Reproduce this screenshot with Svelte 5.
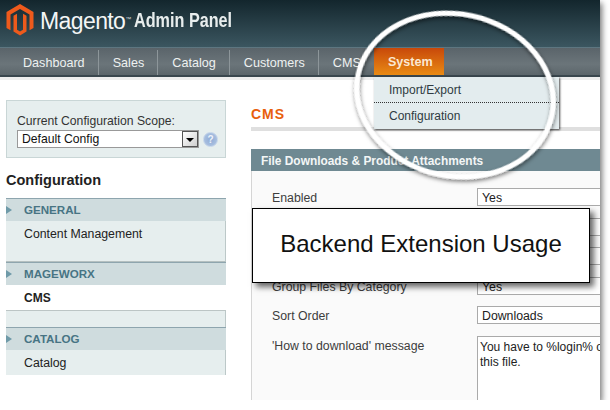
<script>
  const menu = ['Dashboard', 'Sales', 'Catalog', 'Customers', 'CMS'];
  const groups = [
    { title: 'GENERAL', items: ['Content Management'], cls: 'tall' },
    { title: 'MAGEWORX', items: ['CMS'], cls: 'active' },
    { title: 'CATALOG', items: ['Catalog'], cls: '' }
  ];
</script>

<div class="shot">
  <header class="top">
    <svg class="logo" width="28" height="32" viewBox="0 0 28 32">
      <path fill="#ee5a1c" d="M14 0 L27.5 8 V24 L23.5 26.3 V10.4 L14 4.9 L4.5 10.4 V26.3 L.5 24 V8 Z" />
      <path fill="#ee5a1c" d="M14 8 L20.5 11.8 V27.6 L14 31.5 L7.5 27.6 V11.8 L11 9.8 V25.8 L14 27.5 L17 25.8 V9.8 Z" />
    </svg>
    <span class="brand">Magento</span><span class="tm">™</span>
    <span class="panel">Admin Panel</span>
  </header>

  <nav class="nav">
    {#each menu as m}
      <span class="nav-item">{m}</span>
    {/each}
    <span class="nav-item system">System</span>
  </nav>

  <div class="page">
    <aside class="side">
      <div class="scope">
        <div class="scope-label">Current Configuration Scope:</div>
        <div class="scope-row">
          <div class="select">
            <span>Default Config</span>
            <span class="arrow"></span>
          </div>
          <span class="help">?</span>
        </div>
      </div>
      <h3>Configuration</h3>
      {#each groups as g}
        <div class="group-head"><span class="tri"></span>{g.title}</div>
        <div class="group-body {g.cls}">
          {#each g.items as it}<div class="link">{it}</div>{/each}
        </div>
        {#if g.cls === 'active'}<div class="spacer"></div>{/if}
      {/each}
    </aside>

    <main class="main">
      <h2>CMS</h2>
      <div class="section-head">File Downloads &amp; Product Attachments</div>
      <div class="form">
        <div class="row"><label>Enabled</label><div class="input">Yes</div></div>
        <div class="row"><label></label><div class="input"></div></div>
        <div class="row"><label></label><div class="input"></div></div>
        <div class="row"><label>Group Files By Category</label><div class="input">Yes</div></div>
        <div class="row"><label>Sort Order</label><div class="input">Downloads</div></div>
        <div class="row r7">
          <label>'How to download' message</label>
          <div class="input area">You have to %login% or register to download<br />this file.</div>
        </div>
      </div>
    </main>
  </div>

  <div class="drop">
    <div class="drop-item first">Import/Export</div>
    <div class="drop-item">Configuration</div>
  </div>

  <svg class="ring" width="240" height="200" viewBox="0 0 240 200">
    <defs>
      <filter id="ringshadow" x="-20%" y="-20%" width="140%" height="140%">
        <feDropShadow dx="1" dy="2" stdDeviation="2.2" flood-color="#000" flood-opacity="0.55" />
      </filter>
    </defs>
    <ellipse cx="120" cy="95" rx="99" ry="81" transform="rotate(12 120 95)" fill="none" stroke="#fff" stroke-width="5" filter="url(#ringshadow)" />
  </svg>

  <div class="callout">Backend Extension Usage</div>
</div>

<style>
  :global(body) {
    margin: 0;
    background: #fff;
  }

  .shot {
    position: relative;
    width: 600px;
    height: 400px;
    background: #fff;
    overflow: hidden;
    font-family: "Liberation Sans", Arial, sans-serif;
    box-shadow: 2px 3px 6px rgba(0, 0, 0, 0.55);
  }

  .top {
    height: 47px;
    border-bottom: 1px solid #5d7680;
    background: linear-gradient(#13262d, #3b5660);
    display: flex;
    align-items: flex-start;
    padding-left: 6px;
    color: #fff;
  }

  .logo { margin-top: 4px; }

  .brand {
    font-size: 23px;
    margin: 8px 0 0 6px;
    letter-spacing: -0.6px;
    color: #f4f6f6;
  }

  .tm { font-size: 6px; margin-top: 16px; color: #ddd; }

  .panel {
    font-weight: bold;
    font-size: 20px;
    margin: 9px 0 0 3px;
    color: #e8eded;
    transform: scaleX(0.81);
    transform-origin: left;
    white-space: nowrap;
  }

  .nav {
    height: 27px;
    display: flex;
    padding-left: 9px;
    background: linear-gradient(#5a646a, #6b757a 60%, #5c666b);
    border-bottom: 2px solid #3a474e;
  }

  .nav-item {
    padding: 0 13.1px 0 14px;
    font-size: 12.6px;
    color: #eef1f1;
    border-right: 1px solid #8d969a;
    margin: 2px 0 0;
    line-height: 26px;
  }

  .nav-item:nth-child(5) { border-right: 0; }

  .system {
    margin: 0;
    line-height: 28px;
    width: 70px;
    box-sizing: border-box;
    padding: 0 0 0 14px;
    font-weight: bold;
    border-right: 0;
    color: #fbe8d2;
    background: linear-gradient(#c8480a, #e98b14);
  }

  .page {
    display: flex;
    height: 323px;
    border-top: 3px solid #eee;
    box-sizing: border-box;
  }

  .side {
    width: 220px;
    margin-left: 6px;
    padding-top: 20px;
    box-sizing: border-box;
    flex: none;
  }

  .scope {
    height: 58px;
    box-sizing: border-box;
    background: #e6eeee;
    border: 1px solid #c9d6d6;
    padding: 13px 0 0 10px;
    font-size: 12.2px;
    color: #333;
  }

  .scope-row { display: flex; align-items: center; margin-top: 2px; }

  .select {
    width: 182px;
    height: 18px;
    box-sizing: border-box;
    border: 1px solid #999;
    background: #fff;
    display: flex;
    justify-content: space-between;
    align-items: center;
    padding-left: 4px;
    color: #111;
  }

  .arrow {
    width: 16px;
    height: 16px;
    box-sizing: border-box;
    border: 1px solid #555;
    background: linear-gradient(135deg, #fff, #cfcfcf);
    position: relative;
  }

  .arrow::after {
    content: "";
    position: absolute;
    left: 3px;
    top: 6px;
    border: 4px solid transparent;
    border-top-color: #000;
    border-bottom: 0;
  }

  .help {
    width: 13px;
    height: 13px;
    margin-left: 4px;
    border-radius: 50%;
    background: radial-gradient(#8fabd6, #b4c8e4);
    border: 1px solid #c5d5ea;
    color: #eef3fa;
    font-size: 10px;
    font-weight: bold;
    text-align: center;
    line-height: 13px;
  }

  h3 {
    margin: 14px 0 9px;
    font-size: 14.5px;
    line-height: 17px;
    color: #222;
  }

  .group-head {
    height: 23px;
    box-sizing: border-box;
    border-top: 1px solid #8ea5ae;
    background: #cfdcde;
    color: #477484;
    font-size: 11.6px;
    font-weight: bold;
    line-height: 22px;
    display: flex;
    align-items: center;
  }

  .tri {
    width: 0;
    height: 0;
    border-left: 6px solid #6f9aa8;
    border-top: 4px solid transparent;
    border-bottom: 4px solid transparent;
    margin-right: 12px;
  }

  .group-body {
    background: #e6eeee;
    border-right: 1px solid #bcc8c8;
    font-size: 12.3px;
    color: #222;
    padding: 6px 0 0 18px;
    height: 19px;
  }

  .group-body.tall {
    height: 34px;
    border-bottom: 1px solid #b5c0c0;
  }

  .group-body.active {
    background: #fff;
    font-weight: bold;
    font-size: 12px;
    border-right: 0;
    border-bottom: 1px solid #bcc5c5;
  }

  .spacer {
    height: 16px;
    background: #e6eeee;
    border-right: 1px solid #bcc8c8;
  }

  .main {
    margin-left: 25px;
    flex: 1;
    padding-top: 24px;
    min-width: 0;
  }

  h2 {
    margin: 0 0 18px;
    font-size: 14px;
    line-height: 20px;
    color: #e8600c;
    letter-spacing: 1px;
    height: 23px;
    border-bottom: 4px solid #dfdfdf;
  }

  .section-head {
    height: 22px;
    background: #6f8992;
    color: #f3f6f6;
    font-size: 11.9px;
    font-weight: bold;
    line-height: 24px;
    padding-left: 10px;
  }

  .form {
    height: 240px;
    background: #fafafa;
    border-left: 1px solid #d5d5d5;
    padding-top: 17px;
    font-size: 12.3px;
    color: #3d3d3d;
  }

  .row {
    display: flex;
    padding-left: 20px;
    height: 29.5px;
    align-items: flex-start;
  }

  .row label { width: 205px; flex: none; padding-top: 3px; }

  .input {
    flex: 1;
    height: 18px;
    box-sizing: border-box;
    border: 1px solid #aaa;
    border-right: 0;
    background: #fff;
    padding: 2px 4px 0;
    color: #222;
    white-space: nowrap;
    overflow: hidden;
  }

  .input.area {
    flex: none;
    width: 300px;
    height: 80px;
    padding: 3px 2px;
    font-size: 12px;
    line-height: 15px;
  }

  .r7 { height: 80px; }

  .drop {
    position: absolute;
    left: 374px;
    top: 77px;
    width: 185px;
    background: #e3ecee;
    box-shadow: 1px 1px 2px rgba(0, 0, 0, 0.7);
    font-size: 12px;
    color: #2e3b42;
  }

  .drop-item {
    height: 26px;
    line-height: 26px;
    padding-left: 15px;
  }

  .drop-item.first { border-bottom: 1px dotted #333; height: 25px; }

  .ring {
    position: absolute;
    left: 335px;
    top: 0;
  }

  .callout {
    position: absolute;
    left: 252px;
    top: 208px;
    width: 338px;
    height: 75px;
    box-sizing: border-box;
    border: 1px solid #000;
    background: #fff;
    box-shadow: 4px 4px 6px rgba(0, 0, 0, 0.6);
    font-size: 24px;
    color: #111;
    display: flex;
    align-items: center;
    justify-content: center;
    padding-bottom: 4px;
  }
</style>
